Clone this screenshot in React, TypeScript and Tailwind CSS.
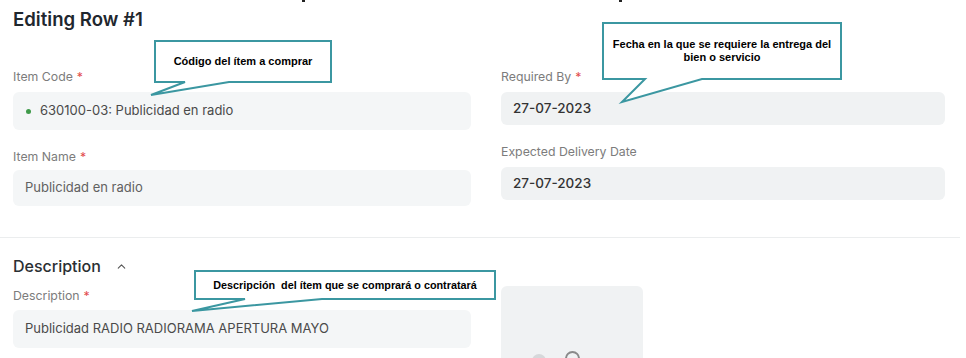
import { ChevronUp } from 'lucide-react';

const Label: React.FC<{ text: string; required?: boolean; className?: string }> = ({ text, required, className }) => (
  <div className={`h-[18px] text-[12.3px] leading-[18px] text-[#7c7c7c] ${className || ''}`}>
    {text}
    {required && <span className="ml-1 text-[#e24c4c]">*</span>}
  </div>
);

const teal = '#3b97a1';

const App: React.FC = () => {
  return (
    <div className="relative w-[966px] h-[358px] overflow-hidden bg-white font-['Inter',sans-serif]">
      {/* remnants of the line above */}
      <span className="absolute left-[302px] top-0 w-[3px] h-[2px] bg-[#222]" />
      <span className="absolute left-[619px] top-0 w-[3px] h-[2px] bg-[#222]" />

      <h1 className="pl-[13px] pt-[5px] text-[18.6px] leading-[28px] font-semibold text-[#1f272e]">Editing Row #1</h1>

      <div className="mt-[35px] pl-[13px] grid grid-cols-[458px_444px] gap-x-[30px]">
        <div className="flex flex-col">
          <Label text="Item Code" required />
          <div className="mt-[6px] h-[38px] rounded-md bg-[#f4f6f7] flex items-center pl-[13px] text-[13px] text-[#4a4a4a]">
            <span className="w-[5px] h-[5px] rounded-full bg-[#3f9a4a] mr-[9px]" />
            630100-03: Publicidad en radio
          </div>
          <Label text="Item Name" required className="mt-[18px]" />
          <div className="mt-[4px] h-[36px] rounded-md bg-[#f4f6f7] flex items-center pl-[12px] text-[13px] text-[#616161]">
            Publicidad en radio
          </div>
        </div>
        <div className="flex flex-col">
          <Label text="Required By" required />
          <div className="mt-[6px] h-[33px] rounded-md bg-[#f0f2f3] flex items-center pl-[12px] text-[13.5px] font-medium text-[#333]">
            27-07-2023
          </div>
          <Label text="Expected Delivery Date" className="mt-[18px]" />
          <div className="mt-[6px] h-[33px] rounded-md bg-[#f0f2f3] flex items-center pl-[12px] text-[13.5px] font-medium text-[#333]">
            27-07-2023
          </div>
        </div>
      </div>

      <div className="mt-[31px] w-[960px] h-px bg-[#ebedee]" />

      <div className="mt-[16px] pl-[13px] flex items-center h-[24px]">
        <span className="text-[16px] leading-[24px] font-medium text-[#2a2f33]">Description</span>
        <ChevronUp size={13} strokeWidth={2} className="ml-[14px] text-[#555]" />
      </div>

      <div className="pl-[13px] grid grid-cols-[458px_142px] gap-x-[30px]">
        <div className="flex flex-col mt-[9px]">
          <Label text="Description" required />
          <div className="mt-[5px] h-[38px] rounded-md bg-[#f4f6f7] flex items-center pl-[12px] text-[13px] text-[#4a4a4a]">
            Publicidad RADIO RADIORAMA APERTURA MAYO
          </div>
        </div>
        <div className="mt-[8px] h-[120px] rounded-md bg-[#f0f2f3] relative">
          <span className="absolute left-[31px] top-[68px] w-[14px] h-[14px] rounded-full bg-[#d6d8da]" />
          <span className="absolute left-[64px] top-[65px] w-[15px] h-[15px] rounded-full border-2 border-[#8a8a8a]" />
        </div>
      </div>

      {/* callouts */}
      <svg className="absolute inset-0 pointer-events-none" width="966" height="358" viewBox="0 0 966 358">
        <path d="M155 41 H331 V82 H229 L151 95 L185 82 H155 Z" fill="white" stroke={teal} strokeWidth="2" strokeLinejoin="miter" />
        <path d="M603 23 H841 V79 H702 L622 102 L645 79 H603 Z" fill="white" stroke={teal} strokeWidth="2" strokeLinejoin="miter" />
        <path d="M195 271 H495 V299 H322 L192 311 L245 299 H195 Z" fill="white" stroke={teal} strokeWidth="2" strokeLinejoin="miter" />
      </svg>
      <div className="absolute left-[156px] top-[53px] w-[174px] text-center font-['Liberation_Sans',Arial,sans-serif] font-bold text-[11px] leading-[16px] text-black">
        Código del ítem a comprar
      </div>
      <div className="absolute left-[604px] top-[38px] w-[236px] text-center font-['Liberation_Sans',Arial,sans-serif] font-bold text-[11px] leading-[13px] text-black">
        Fecha en la que se requiere la entrega del
        <br />
        bien o servicio
      </div>
      <div className="absolute left-[196px] top-[277px] w-[298px] text-center font-['Liberation_Sans',Arial,sans-serif] font-bold text-[10.8px] leading-[16px] text-black whitespace-pre">
        {'Descripción  del ítem que se comprará o contratará'}
      </div>
    </div>
  );
};

export default App;
